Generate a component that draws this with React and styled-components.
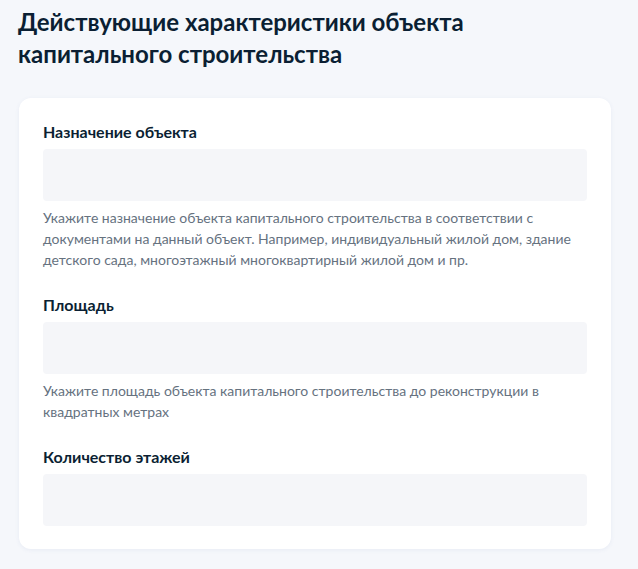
import React from 'react';
import styled, { createGlobalStyle } from 'styled-components';

const GlobalStyle = createGlobalStyle`
  html, body {
    margin: 0;
    padding: 0;
    background: #f5f7fb;
    font-family: Lato, "Noto Sans", sans-serif;
    -webkit-font-smoothing: antialiased;
  }
`;

const Page = styled.div`
  padding: 6px 27px 20px 19px;
  min-height: 569px;
  box-sizing: border-box;
`;

const Title = styled.h1`
  margin: 0 0 28px -1px;
  font-size: 24px;
  line-height: 32px;
  font-weight: 700;
  color: #0b1f33;
`;

const Card = styled.div`
  background: #ffffff;
  border-radius: 12px;
  box-shadow: 0 1px 4px rgba(75, 100, 160, 0.08);
  padding: 24px 24px 23px;
  display: flex;
  flex-direction: column;
  gap: 25px;
`;

const Field = styled.div`
  display: flex;
  flex-direction: column;
`;

const Label = styled.label`
  font-size: 16px;
  line-height: 20px;
  font-weight: 700;
  color: #0b1f33;
  margin-bottom: 7px;
`;

const Input = styled.div`
  height: 52px;
  border-radius: 4px;
  background: #f5f6f9;
`;

const Hint = styled.div`
  margin-top: 6px;
  font-size: 14px;
  line-height: 21px;
  color: #66727f;
`;

const fields = [
  {
    label: 'Назначение объекта',
    hint: 'Укажите назначение объекта капитального строительства в соответствии с документами на данный объект. Например, индивидуальный жилой дом, здание детского сада, многоэтажный многоквартирный жилой дом и пр.',
  },
  {
    label: 'Площадь',
    hint: 'Укажите площадь объекта капитального строительства до реконструкции в квадратных метрах',
  },
  { label: 'Количество этажей' },
];

export default function App() {
  return (
    <>
      <GlobalStyle />
      <Page>
        <Title>
          Действующие характеристики объекта
          <br />
          капитального строительства
        </Title>
        <Card>
          {fields.map((f) => (
            <Field key={f.label}>
              <Label>{f.label}</Label>
              <Input />
              {f.hint && <Hint>{f.hint}</Hint>}
            </Field>
          ))}
        </Card>
      </Page>
    </>
  );
}
